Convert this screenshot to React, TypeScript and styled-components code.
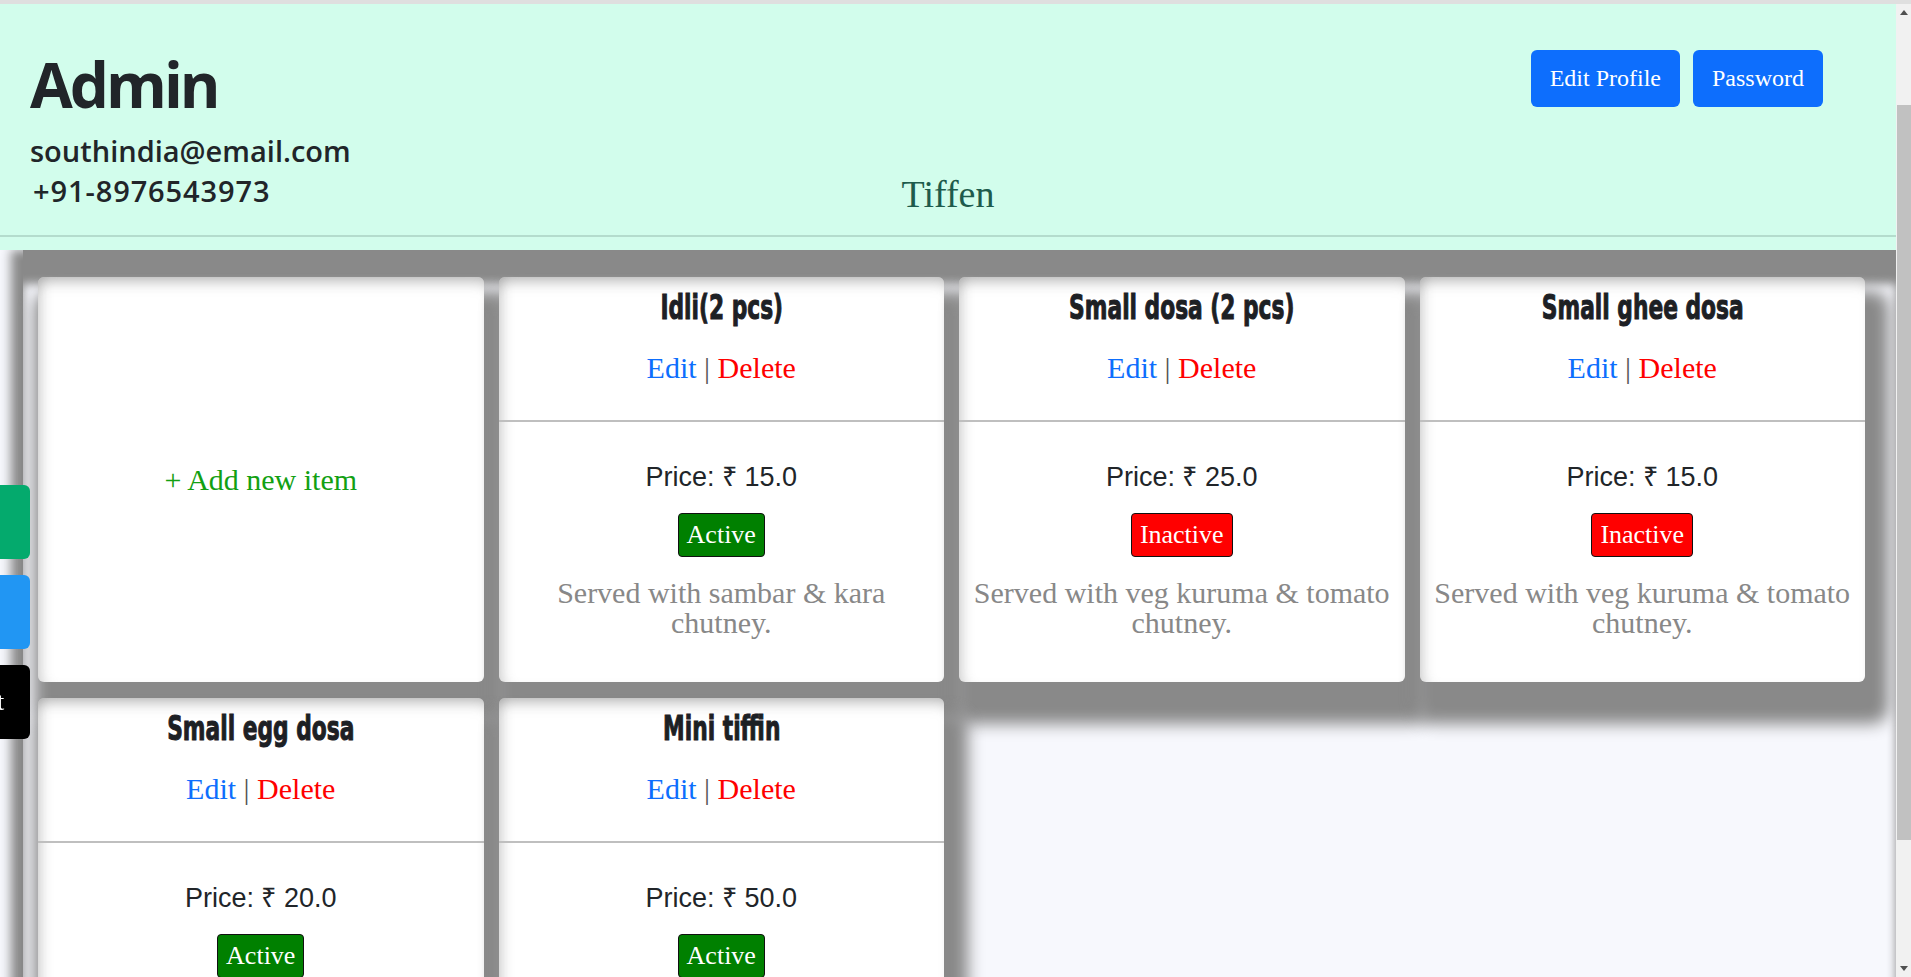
import React from 'react'
import styled, { createGlobalStyle } from 'styled-components'

const GlobalStyle = createGlobalStyle`
  html, body {
    margin: 0;
    padding: 0;
    height: 100%;
    overflow: hidden;
  }
  body {
    background: #f7f8fd;
    font-family: "Liberation Serif", "Times New Roman", serif;
  }
`

const Shell = styled.div`
  display: flex;
  height: 100vh;
  box-sizing: border-box;
  border-top: 4px solid #dfdfdf;
`

const Page = styled.div`
  flex: 1;
  min-width: 0;
  overflow: hidden;
`

const HeaderWrap = styled.header`
  position: relative;
  z-index: 1;
  background: #d2fdec;
  padding-bottom: 13px;
`

const HeaderBar = styled.div`
  display: grid;
  grid-template-columns: 1fr auto 1fr;
  height: 233px;
  box-sizing: border-box;
  border-bottom: 2px solid #b4dccd;
`

const Profile = styled.div`
  padding: 45px 0 0 30px;
  font-family: "Open Sans", "Noto Sans", sans-serif;
  color: #212529;
`

const Name = styled.h1`
  margin: 0 0 12px;
  font-size: 62px;
  line-height: 70px;
  font-weight: 700;
  letter-spacing: -3px;
`

const Contact = styled.div`
  font-size: 29px;
  line-height: 40px;
  font-weight: 600;
  padding-left: ${(p) => (p.$phone ? '3px' : '0')};
  letter-spacing: ${(p) => (p.$phone ? '0.9px' : '0')};
`

const Category = styled.div`
  align-self: end;
  margin-bottom: 21px;
  font-size: 38px;
  line-height: 40px;
  color: #1e5b4c;
`

const Actions = styled.div`
  justify-self: end;
  align-self: start;
  display: flex;
  gap: 13px;
  margin-top: 46px;
  padding-right: 73px;
`

const HeadButton = styled.button`
  height: 57px;
  padding: 0 19px;
  border: none;
  border-radius: 6px;
  background: #0d6efd;
  color: #fff;
  font-family: "Liberation Serif", serif;
  font-size: 24px;
`

const Board = styled.main`
  margin-left: 23px;
  padding: 27px 31px 0 15px;
  min-height: 900px;
  background: #f7f8fd;
  box-shadow: -12px 0 10px 0 #898989, inset 0 34px 10px 0 #898989;
  display: grid;
  grid-template-columns: repeat(4, 1fr);
  grid-auto-rows: min-content;
  gap: 16px 15px;
`

const Card = styled.article`
  background: #fff;
  border-radius: 6px;
  display: flex;
  flex-direction: column;
  box-shadow: 10px 28px 16px 14px #898989,
    inset 0 14px 14px -10px rgba(120, 120, 120, 0.55),
    inset 12px 0 12px -8px rgba(120, 120, 120, 0.3);
`

const AddCard = styled(Card)`
  align-items: center;
  justify-content: center;
  color: #12a012;
  font-size: 30px;
`

const CardHead = styled.div`
  padding: 12px 16px 36px;
  text-align: center;
`

const Title = styled.h5`
  margin: 0;
  font-family: "DejaVu Sans", sans-serif;
  font-size: 34px;
  line-height: 37px;
  font-weight: 700;
  color: #1d2024;
  white-space: nowrap;
  -webkit-text-stroke: 1.1px #1d2024;
  transform: scaleX(0.64);
`

const Links = styled.div`
  margin-top: 26px;
  font-size: 30px;
  line-height: 32px;
  color: #555;
`

const EditLink = styled.span`
  color: #0d6efd;
`

const DeleteLink = styled.span`
  color: #ff0000;
`

const CardBody = styled.div`
  border-top: 2px solid #bfbfbf;
  padding: 40px 12px 44px;
  display: flex;
  flex-direction: column;
  align-items: center;
  gap: 21px;
`

const Price = styled.div`
  font-family: "Liberation Sans", Arial, sans-serif;
  font-size: 27px;
  line-height: 30px;
  color: #212529;
`

const Badge = styled.span`
  height: 44px;
  box-sizing: border-box;
  padding: 0 8px;
  border: 1px solid #111;
  border-radius: 4px;
  background: ${(p) => (p.$active ? '#008000' : '#ff0000')};
  color: #fff;
  font-size: 26px;
  line-height: 42px;
`

const Description = styled.p`
  margin: 0;
  text-align: center;
  font-size: 30px;
  line-height: 30px;
  color: #888;
`

const SideNav = styled.nav`
  position: fixed;
  top: 485px;
  left: 0;
  z-index: 2;
  display: flex;
  flex-direction: column;
  gap: 16px;
`

const SideTab = styled.a`
  width: 110px;
  height: 74px;
  margin-left: -80px;
  box-sizing: border-box;
  padding-left: 9px;
  display: flex;
  align-items: center;
  border-radius: 0 6px 6px 0;
  background: ${(p) => p.$color};
  color: #fff;
  font-size: 26px;
  text-decoration: none;
`

const ScrollBar = styled.div`
  flex: none;
  width: 15px;
  background: #f1f1f1;
  display: flex;
  flex-direction: column;
`

const ScrollArrow = styled.div`
  height: 17px;
  display: flex;
  align-items: center;
  justify-content: center;
`

const Thumb = styled.div`
  margin: 84px 0 0 1px;
  height: 735px;
  background: #c1c1c1;
`

const Spacer = styled.div`
  flex: 1;
`

type Item = {
  name: string
  price: string
  active: boolean
  desc: string
}

const items: Item[] = [
  { name: 'Idli(2 pcs)', price: '15.0', active: true, desc: 'Served with sambar & kara chutney.' },
  { name: 'Small dosa (2 pcs)', price: '25.0', active: false, desc: 'Served with veg kuruma & tomato chutney.' },
  { name: 'Small ghee dosa', price: '15.0', active: false, desc: 'Served with veg kuruma & tomato chutney.' },
  { name: 'Small egg dosa', price: '20.0', active: true, desc: 'Served with veg kuruma & tomato chutney.' },
  { name: 'Mini tiffin', price: '50.0', active: true, desc: 'Idli, vada, pongal & kesari with chutney.' },
]

const Arrow = ({ up }: { up?: boolean }) => (
  <svg width="8" height="5" viewBox="0 0 8 5">
    <path d={up ? 'M0 5 L4 0 L8 5 Z' : 'M0 0 L4 5 L8 0 Z'} fill="#505050" />
  </svg>
)

const MenuCard = ({ item }: { item: Item }) => (
  <Card>
    <CardHead>
      <Title>{item.name}</Title>
      <Links>
        <EditLink>Edit</EditLink> | <DeleteLink>Delete</DeleteLink>
      </Links>
    </CardHead>
    <CardBody>
      <Price>Price: ₹ {item.price}</Price>
      <Badge $active={item.active}>{item.active ? 'Active' : 'Inactive'}</Badge>
      <Description>{item.desc}</Description>
    </CardBody>
  </Card>
)

export default function App() {
  return (
    <>
      <GlobalStyle />
      <Shell>
        <Page>
          <HeaderWrap>
            <HeaderBar>
              <Profile>
                <Name>Admin</Name>
                <Contact>southindia@email.com</Contact>
                <Contact $phone>+91-8976543973</Contact>
              </Profile>
              <Category>Tiffen</Category>
              <Actions>
                <HeadButton>Edit Profile</HeadButton>
                <HeadButton>Password</HeadButton>
              </Actions>
            </HeaderBar>
          </HeaderWrap>
          <Board>
            <AddCard>+ Add new item</AddCard>
            {items.map((item) => (
              <MenuCard key={item.name} item={item} />
            ))}
          </Board>
        </Page>
        <ScrollBar>
          <ScrollArrow>
            <Arrow up />
          </ScrollArrow>
          <Thumb />
          <Spacer />
          <ScrollArrow>
            <Arrow />
          </ScrollArrow>
        </ScrollBar>
      </Shell>
      <SideNav>
        <SideTab $color="#04aa6d">Home</SideTab>
        <SideTab $color="#2196f3">Menu</SideTab>
        <SideTab $color="#000">Logout</SideTab>
      </SideNav>
    </>
  )
}
